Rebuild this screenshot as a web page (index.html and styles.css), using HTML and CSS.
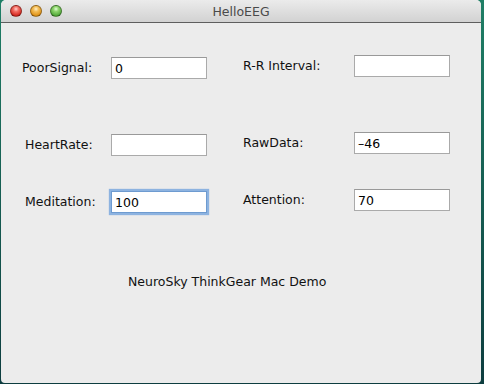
FILE: index.html
```html
<!DOCTYPE html>
<html lang="en">
<head>
    <meta charset="UTF-8">
    <meta name="viewport" content="width=device-width, initial-scale=1.0">
    <title>HelloEEG</title>
    <link rel="stylesheet" href="styles.css">
</head>
<body>
    <div class="window">
        <header class="titlebar">
            <div class="lights">
                <span class="light close"></span>
                <span class="light minimize"></span>
                <span class="light zoom"></span>
            </div>
            <h1 class="title">HelloEEG</h1>
            <div></div>
        </header>
        <main class="content">
            <div class="form">
                <div class="col col-left">
                    <div class="field">
                        <label for="poorSignal">PoorSignal:</label>
                        <input type="text" id="poorSignal" value="0">
                    </div>
                    <div class="field">
                        <label class="indent" for="heartRate">HeartRate:</label>
                        <input type="text" id="heartRate" value="">
                    </div>
                    <div class="field">
                        <label class="indent" for="meditation">Meditation:</label>
                        <input type="text" id="meditation" class="focused" value="100">
                    </div>
                </div>
                <div class="col col-right">
                    <div class="field">
                        <label for="rrInterval">R-R Interval:</label>
                        <input type="text" id="rrInterval" value="">
                    </div>
                    <div class="field">
                        <label for="rawData">RawData:</label>
                        <input type="text" id="rawData" value="&#8211;46">
                    </div>
                    <div class="field">
                        <label for="attention">Attention:</label>
                        <input type="text" id="attention" value="70">
                    </div>
                </div>
            </div>
            <p class="caption">NeuroSky ThinkGear Mac Demo</p>
        </main>
    </div>
</body>
</html>
```

FILE: styles.css
```css
html, body {
    height: 100%;
}
body {
    margin: 0;
    background: linear-gradient(#1f7f66, #0d3d3f);
    font-family: "DejaVu Sans", sans-serif;
    font-size: 12.5px;
    color: #111;
}
.window {
    margin-left: 1px;
    width: 480px;
    height: 383px;
    background: #ececec;
    border-radius: 5px 5px 4px 4px;
    overflow: hidden;
}
.titlebar {
    display: grid;
    grid-template-columns: 1fr auto 1fr;
    align-items: center;
    height: 22px;
    background: linear-gradient(#ebebeb, #d2d2d2);
    border-bottom: 1px solid #5e5e5e;
}
.lights {
    display: flex;
    gap: 8px;
    padding-left: 9px;
}
.light {
    width: 12px;
    height: 12px;
    border-radius: 50%;
    box-sizing: border-box;
    border: 1px solid rgba(0, 0, 0, 0.35);
}
.close {
    background: radial-gradient(circle at 50% 30%, #ffd0cc 0, #f26d63 30%, #d3281f 75%, #a3140f 100%);
}
.minimize {
    background: radial-gradient(circle at 50% 30%, #fff0c8 0, #f3bd57 30%, #df9217 75%, #a8660a 100%);
}
.zoom {
    background: radial-gradient(circle at 50% 30%, #e2ffd6 0, #8ed46d 30%, #52a93a 75%, #2f7a20 100%);
}
.title {
    margin: 0;
    font-size: 12.5px;
    font-weight: normal;
    color: #4a4a4a;
}
.form {
    display: grid;
    grid-template-columns: 242px 1fr;
}
.col {
    display: flex;
    flex-direction: column;
}
.col-left {
    padding: 34px 0 0 21px;
}
.col-right {
    padding-top: 32px;
}
.field {
    display: flex;
    align-items: center;
    height: 22px;
}
.field + .field {
    margin-top: 55px;
}
.field + .field + .field {
    margin-top: 35px;
}
.col-left label {
    width: 89px;
}
.col-right label {
    width: 111px;
}
label {
    box-sizing: border-box;
    padding-bottom: 2px;
}
label.indent {
    padding-left: 3px;
}
.field input {
    box-sizing: border-box;
    width: 96px;
    height: 22px;
    margin: 0;
    padding: 0 3px;
    border: 1px solid #aaa;
    border-top-color: #999;
    background: #fff;
    font-family: "DejaVu Sans", sans-serif;
    font-size: 12.5px;
    color: #000;
    outline: none;
}
.field input.focused {
    border-color: #6e9bd0;
    box-shadow: 0 0 1px 2px #8db3e0;
}
.caption {
    margin: 61px 0 0 127px;
}
```
